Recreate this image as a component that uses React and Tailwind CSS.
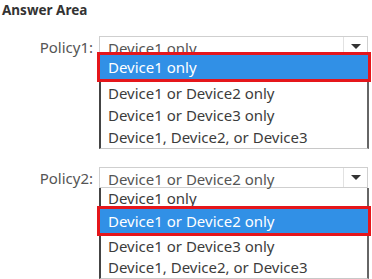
import React from "react";

const font = { fontFamily: '"Noto Sans", "Open Sans", sans-serif' };

function Arrow() {
  return (
    <div className="w-[24px] h-full border-l border-[#e2e2e2] flex items-center justify-center">
      <div className="w-0 h-0 border-l-[5px] border-r-[5px] border-t-[5px] border-l-transparent border-r-transparent border-t-[#333]" />
    </div>
  );
}

function Select({ value }) {
  return (
    <div className="ml-[2px] mr-[3px] h-[21px] border border-[#cfcfcf] bg-white flex items-center">
      <div className="flex-1 pl-[8px] pt-[3px] text-[15px] leading-[19px] text-[#555] whitespace-nowrap overflow-hidden">{value}</div>
      <Arrow />
    </div>
  );
}

function Highlight({ text }) {
  return (
    <div className="relative h-[30px] border-[3px] border-[#e5161b] bg-[#3190e6] flex items-center pl-[8px] text-[15px] text-white whitespace-nowrap">
      {text}
    </div>
  );
}

function Item({ text, h = "h-[21px]" }) {
  return (
    <div className={`${h} flex items-center pl-[7px] text-[15px] text-[#3c3c3c] whitespace-nowrap`}>{text}</div>
  );
}

export default function App() {
  return (
    <div className="w-[372px] h-[279px] bg-white overflow-hidden flex flex-col" style={font}>
      <div className="pt-[2px] pl-[2px] text-[13.5px] leading-[17px] font-bold text-[#333]">Answer Area</div>

      <div className="mt-[17px] flex items-start">
        <div className="w-[93px] pt-[1px] text-right text-[15px] leading-[21px] text-[#555]">Policy1:</div>
        <div className="ml-[4px] w-[274px] flex flex-col">
          <Select value="Device1 only" />
          <div className="-mt-[5px]">
            <Highlight text="Device1 only" />
          </div>
          <div className="mx-[2px] border-l-2 border-r-2 border-l-[#444] border-r-[#666] border-b border-b-[#c8c8c8]">
            <Item text="Device1 or Device2 only" h="h-[22px]" />
            <Item text="Device1 or Device3 only" h="h-[22px]" />
            <Item text="Device1, Device2, or Device3" h="h-[22px]" />
          </div>
        </div>
      </div>

      <div className="mt-[18px] flex items-start">
        <div className="w-[93px] pt-[1px] text-right text-[15px] leading-[21px] text-[#555]">Policy2:</div>
        <div className="ml-[4px] w-[274px] flex flex-col">
          <Select value="Device1 or Device2 only" />
          <div className="mx-[2px] border-l-2 border-r-2 border-l-[#444] border-r-[#666]">
            <Item text="Device1 only" />
          </div>
          <div className="-mt-[3px]">
            <Highlight text="Device1 or Device2 only" />
          </div>
          <div className="mx-[2px] border-l-2 border-r-2 border-l-[#444] border-r-[#666] border-b border-b-[#c8c8c8]">
            <Item text="Device1 or Device3 only" />
            <Item text="Device1, Device2, or Device3" />
          </div>
        </div>
      </div>
    </div>
  );
}
